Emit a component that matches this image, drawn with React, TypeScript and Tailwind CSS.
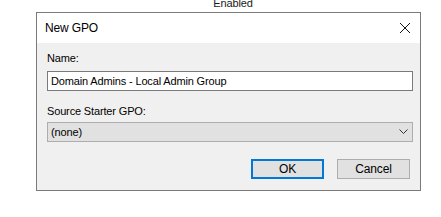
import React from 'react';

const font = { fontFamily: '"Liberation Sans", Arial, sans-serif' };

const App = () => {
  return (
    <div className="w-[441px] h-[217px] bg-white overflow-hidden text-[11px] tracking-[-0.15px] text-black" style={font}>
      <div className="h-[12px] overflow-hidden flex justify-center pl-[25px]">
        <span className="leading-[15px] -mt-[4px] text-[#1a1a1a]">Enabled</span>
      </div>

      <div className="ml-[36px] w-[385px] h-[179px] border border-[#7a7a7a] flex flex-col bg-[#f0f0f0]">
        <div className="h-[30px] bg-white flex items-center justify-between pl-[8px] pr-[8px] shrink-0">
          <span className="leading-[15px] text-[12px]">New GPO</span>
          <svg width="12" height="12" viewBox="0 0 12 12" className="mr-[1px]">
            <path d="M1 1 L11 11 M11 1 L1 11" stroke="#111" strokeWidth="1" />
          </svg>
        </div>

        <div className="flex flex-col pl-[10px] pt-[8px]">
          <div className="h-[15px] leading-[15px]">Name:</div>
          <div className="mt-[5px] w-[366px] h-[20px] border border-[#7a7a7a] bg-white flex items-center pl-[3px] leading-[15px]">
            Domain Admins - Local Admin Group
          </div>

          <div className="mt-[13px] h-[15px] leading-[15px]">Source Starter GPO:</div>
          <div className="mt-[3px] w-[366px] h-[20px] border border-[#adadad] bg-[#e1e1e1] flex items-center justify-between pl-[3px] pr-[4px] leading-[15px]">
            <span>(none)</span>
            <svg width="9" height="6" viewBox="0 0 9 6">
              <path d="M0.5 0.5 L4.5 4.5 L8.5 0.5" stroke="#333" strokeWidth="1" fill="none" />
            </svg>
          </div>

          <div className="mt-[17px] flex justify-end gap-[13px] pr-[10px]">
            <button className="w-[73px] h-[20px] border-2 border-[#0078d7] bg-[#e1e1e1] leading-[15px] text-[12px]">OK</button>
            <button className="w-[73px] h-[20px] border border-[#adadad] bg-[#e1e1e1] leading-[15px] text-[12px]">Cancel</button>
          </div>
        </div>
      </div>
    </div>
  );
};

export default App;
